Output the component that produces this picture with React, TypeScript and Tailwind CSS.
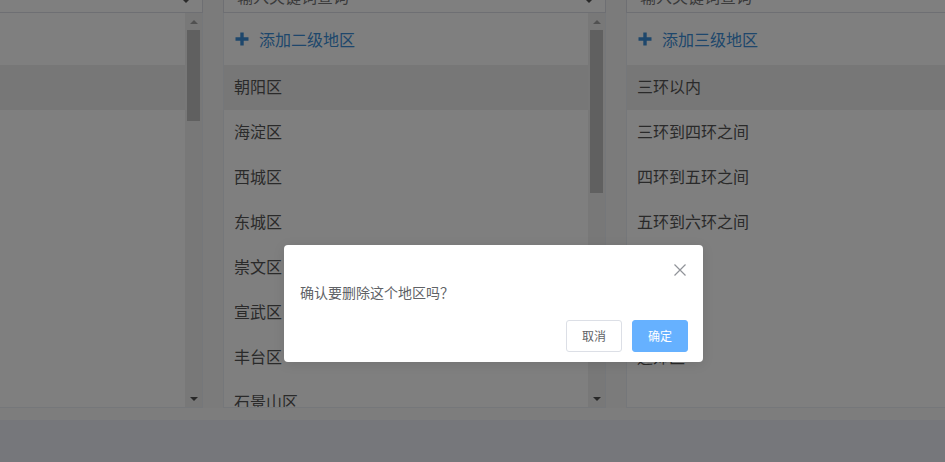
import React from "react";

const font = { fontFamily: '"Noto Sans CJK SC", "Noto Sans", sans-serif' };

type Col = {
  addLabel: string;
  items: string[];
  active: number;
  thumb?: string | null;
  shift?: boolean;
};

const cols: Col[] = [
  {
    addLabel: "添加一级地区",
    items: ["北京", "天津", "河北", "山西", "内蒙古", "辽宁", "吉林", "黑龙江"],
    active: 0,
    thumb: "h-[91px]",
    shift: true,
  },
  {
    addLabel: "添加二级地区",
    items: ["朝阳区", "海淀区", "西城区", "东城区", "崇文区", "宣武区", "丰台区", "石景山区"],
    active: 0,
    thumb: "h-[163px]",
  },
  {
    addLabel: "添加三级地区",
    items: ["三环以内", "三环到四环之间", "四环到五环之间", "五环到六环之间", "六环以外", "城郊区", "远郊区"],
    active: 0,
    thumb: null,
  },
];

const Scrollbar = ({ thumbHeight }: { thumbHeight: string }) => (
  <div className="flex w-[17px] shrink-0 flex-col bg-[#f1f1f1]">
    <div className="flex h-[17px] items-center justify-center">
      <div className="h-0 w-0 border-x-[4px] border-b-[4px] border-x-transparent border-b-[#a3a3a3]" />
    </div>
    <div className={`mx-[2px] ${thumbHeight} bg-[#c1c1c1]`} />
    <div className="flex-1" />
    <div className="flex h-[17px] items-center justify-center">
      <div className="h-0 w-0 border-x-[4px] border-t-[4px] border-x-transparent border-t-[#505050]" />
    </div>
  </div>
);

const Column = ({ col }: { col: Col }) => (
  <div className={`flex w-[383px] shrink-0 flex-col ${col.shift ? "-ml-[180px]" : ""}`}>
    <div className="relative flex h-[34px] items-center border border-[#dcdfe6] bg-white px-[13px]">
      <span className="text-[16px] text-[#777]">输入关键词查询</span>
      <div className="absolute right-[12px] top-[19px] h-0 w-0 border-x-[4px] border-t-[4px] border-x-transparent border-t-[#555]" />
    </div>
    <div className="flex h-[395px] overflow-hidden border-x border-b border-[#ebeef5] bg-white">
      <div className="flex min-w-0 flex-1 flex-col">
        <div className="flex h-[52px] shrink-0 items-center gap-[10px] px-[11px] pb-[1px] text-[16px] text-[#3d8fd8]">
          <svg width="14" height="14" viewBox="0 0 14 14">
            <path d="M7 0.5v13M0.5 7h13" stroke="currentColor" strokeWidth="3.4" />
          </svg>
          <span>{col.addLabel}</span>
        </div>
        {col.items.map((it, i) => (
          <div
            key={it}
            className={`flex h-[45px] shrink-0 items-center px-[10px] pb-[4px] text-[16px] text-[#555] ${
              i === col.active ? "bg-[#efefef]" : ""
            }`}
          >
            {it}
          </div>
        ))}
      </div>
      {col.thumb && <Scrollbar thumbHeight={col.thumb} />}
    </div>
  </div>
);

export default function App() {
  return (
    <div className="relative flex h-[462px] w-[945px] flex-col overflow-hidden bg-[#f7f7f7]" style={font}>
      <div className="-mt-[21px] flex shrink-0 gap-[20px]">
        {cols.map((c) => (
          <Column key={c.addLabel} col={c} />
        ))}
      </div>
      <div className="h-[12px] shrink-0 bg-[#fbfbfb]" />
      <div className="h-[42px] shrink-0 bg-[#eceef6]" />

      <div className="absolute inset-0 bg-black/50" />

      <div className="absolute left-[284px] top-[245px] flex w-[419px] flex-col rounded-[4px] bg-white pb-[10px] pt-[15px] shadow-[0_2px_12px_rgba(0,0,0,0.1)]">
        <div className="flex h-[18px] items-center justify-end pr-[15px]">
          <svg width="14" height="14" viewBox="0 0 14 14" className="mr-[1px] mt-[2px]">
            <path d="M1.5 1.5l11 11M12.5 1.5l-11 11" stroke="#909399" strokeWidth="1.2" />
          </svg>
        </div>
        <div className="mt-[4px] flex h-[22px] items-center px-[16px] pb-[2px] text-[14px] text-[#606266]">
          确认要删除这个地区吗？
        </div>
        <div className="mt-[16px] flex justify-end gap-[10px] px-[15px]">
          <button className="h-[32px] w-[56px] rounded-[3px] border border-[#dcdfe6] bg-white text-[12px] text-[#606266]">
            取消
          </button>
          <button className="h-[32px] w-[56px] rounded-[3px] border border-[#66b1ff] bg-[#66b1ff] text-[12px] text-white">
            确定
          </button>
        </div>
      </div>
    </div>
  );
}
